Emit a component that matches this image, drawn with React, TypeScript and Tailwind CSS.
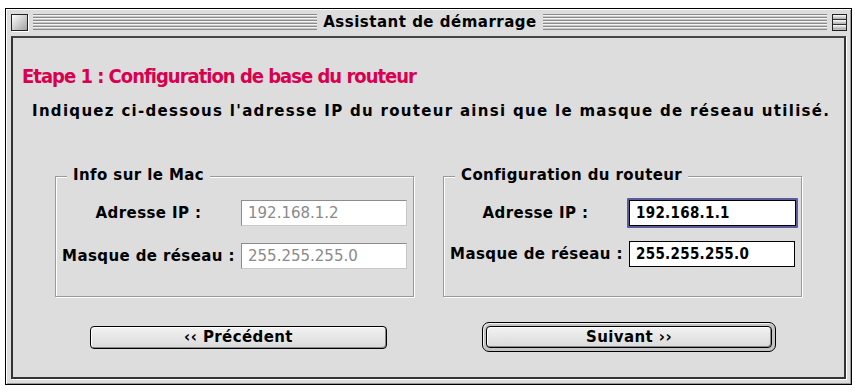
import React from 'react';

const font = "font-['DejaVu_Sans',sans-serif]";
const cond = "font-['DejaVu_Sans_Condensed','DejaVu_Sans',sans-serif]";

const Stripes: React.FC<{ className?: string }> = ({ className = '' }) => (
  <div
    className={`h-[16px] bg-[repeating-linear-gradient(to_bottom,#8a8a8a_0px,#8a8a8a_1px,#f4f4f4_1px,#f4f4f4_2px,#c8c8c8_2px,#c8c8c8_3px)] ${className}`}
  />
);

const Field: React.FC<{ value: string; dim?: boolean; focused?: boolean; w: string }> = ({ value, dim, focused, w }) => (
  <div className={`${w} ${focused ? 'p-[2px] bg-[#5a5a9c] rounded-[1px]' : ''}`}>
    <div
      className={`h-[26px] flex items-center pl-[6px] text-[15px] bg-white border ${
        focused ? 'border-black' : dim ? 'border-[#8c8c8c] border-b-[#c8c8c8] border-r-[#c8c8c8]' : 'border-black'
      } ${dim ? `text-[#8a8a8a] font-normal ${font}` : `text-black font-bold tracking-[0.3px] ${cond}`}`}
    >
      {value}
    </div>
  </div>
);

const Row: React.FC<{ label: string; children: React.ReactNode }> = ({ label, children }) => (
  <div className="flex items-center">
    <div className="flex-1 text-center text-[15px] font-bold tracking-[0.4px]">{label}</div>
    {children}
  </div>
);

const Group: React.FC<{ title: string; children: React.ReactNode }> = ({ title, children }) => (
  <div className="relative w-[359px] h-[121px] border border-[#9a9a9a] shadow-[1px_1px_0_#ffffff,inset_1px_1px_0_#ffffff]">
    <div className="absolute -top-[13px] left-[11px] px-[6px] bg-[#dddddd] text-[15px] font-bold tracking-[0.4px] leading-[22px]">{title}</div>
    {children}
  </div>
);

const Button: React.FC<{ label: string; primary?: boolean }> = ({ label, primary }) => {
  const inner = (
    <div
      className={`${primary ? 'w-[286px] h-[22px]' : 'w-[297px] h-[23px]'} rounded-[4px] border border-black bg-[linear-gradient(#f2f2f2,#dadada)] shadow-[inset_-1px_-1px_0_#8a8a8a,inset_1px_1px_0_#ffffff] flex items-center justify-center text-[15px] font-bold tracking-[0.4px]`}
    >
      {label}
    </div>
  );
  if (!primary) return inner;
  return (
    <div className="p-[3px] rounded-[7px] border border-black bg-[#c4c4c4] shadow-[inset_1px_1px_0_#f0f0f0]">{inner}</div>
  );
};

export default function App() {
  return (
    <div className={`w-[855px] h-[392px] bg-white pt-[8px] pl-[5px] text-black ${font}`}>
      <div className="w-[847px] h-[377px] border border-black bg-[#dddddd] flex flex-col shadow-[inset_1px_1px_0_#ffffff,inset_-1px_-1px_0_#999999]">
        {/* title bar */}
        <div className="h-[26px] flex items-center pl-[5px] pr-[4px]">
          <div className="w-[17px] h-[17px] border border-[#222] bg-[linear-gradient(135deg,#ffffff,#a0a0a0)] shadow-[1px_1px_0_#ffffff]" />
          <Stripes className="flex-1 ml-[5px]" />
          <div className="px-[6px] text-[15px] font-bold tracking-[0.5px] leading-[20px]">Assistant de démarrage</div>
          <Stripes className="flex-1 mr-[5px]" />
          <div className="w-[15px] h-[17px] border border-[#222] bg-[#bbbbbb] flex flex-col">
            <div className="flex-1 border-b border-[#333] bg-[linear-gradient(#ffffff,#aaaaaa)]" />
            <div className="flex-1 border-b border-[#333] bg-[linear-gradient(#ffffff,#aaaaaa)]" />
            <div className="flex-1 bg-[linear-gradient(#ffffff,#aaaaaa)]" />
          </div>
        </div>
        {/* content */}
        <div className="flex-1 mx-[5px] mb-[5px] mt-[1px] border-2 border-[#333333] border-t-[#444444] bg-[#dddddd] shadow-[1px_1px_0_#ffffff] flex flex-col">
          <div className={`pl-[9px] pt-[25px] text-[#d8004f] text-[20px] font-bold tracking-[-1px] leading-[26px] ${cond}`}>
            Etape 1 : Configuration de base du routeur
          </div>
          <div className="pl-[19px] pt-[13px] text-[15px] font-bold tracking-[1.3px] leading-[18px] whitespace-nowrap">
            Indiquez ci-dessous l'adresse IP du routeur ainsi que le masque de réseau utilisé.
          </div>
          <div className="flex pl-[42px] pt-[56px] gap-[29px]">
            <Group title="Info sur le Mac">
              <div className="flex flex-col gap-[17px] pt-[23px] pr-[6px]">
                <Row label="Adresse IP :">
                  <Field value="192.168.1.2" dim w="w-[166px]" />
                </Row>
                <Row label="Masque de réseau :">
                  <Field value="255.255.255.0" dim w="w-[166px]" />
                </Row>
              </div>
            </Group>
            <Group title="Configuration du routeur">
              <div className="flex flex-col gap-[13px] pt-[21px]">
                <Row label="Adresse IP :">
                  <div className="pr-[3px]">
                    <Field value="192.168.1.1" focused w="w-[171px]" />
                  </div>
                </Row>
                <Row label="Masque de réseau :">
                  <div className="pr-[6px]">
                    <Field value="255.255.255.0" w="w-[166px]" />
                  </div>
                </Row>
              </div>
            </Group>
          </div>
          <div className="flex items-center pl-[77px] pt-[25px]">
            <Button label="‹‹ Précédent" />
            <div className="ml-[95px]">
              <Button label="Suivant ››" primary />
            </div>
          </div>
        </div>
      </div>
    </div>
  );
}
